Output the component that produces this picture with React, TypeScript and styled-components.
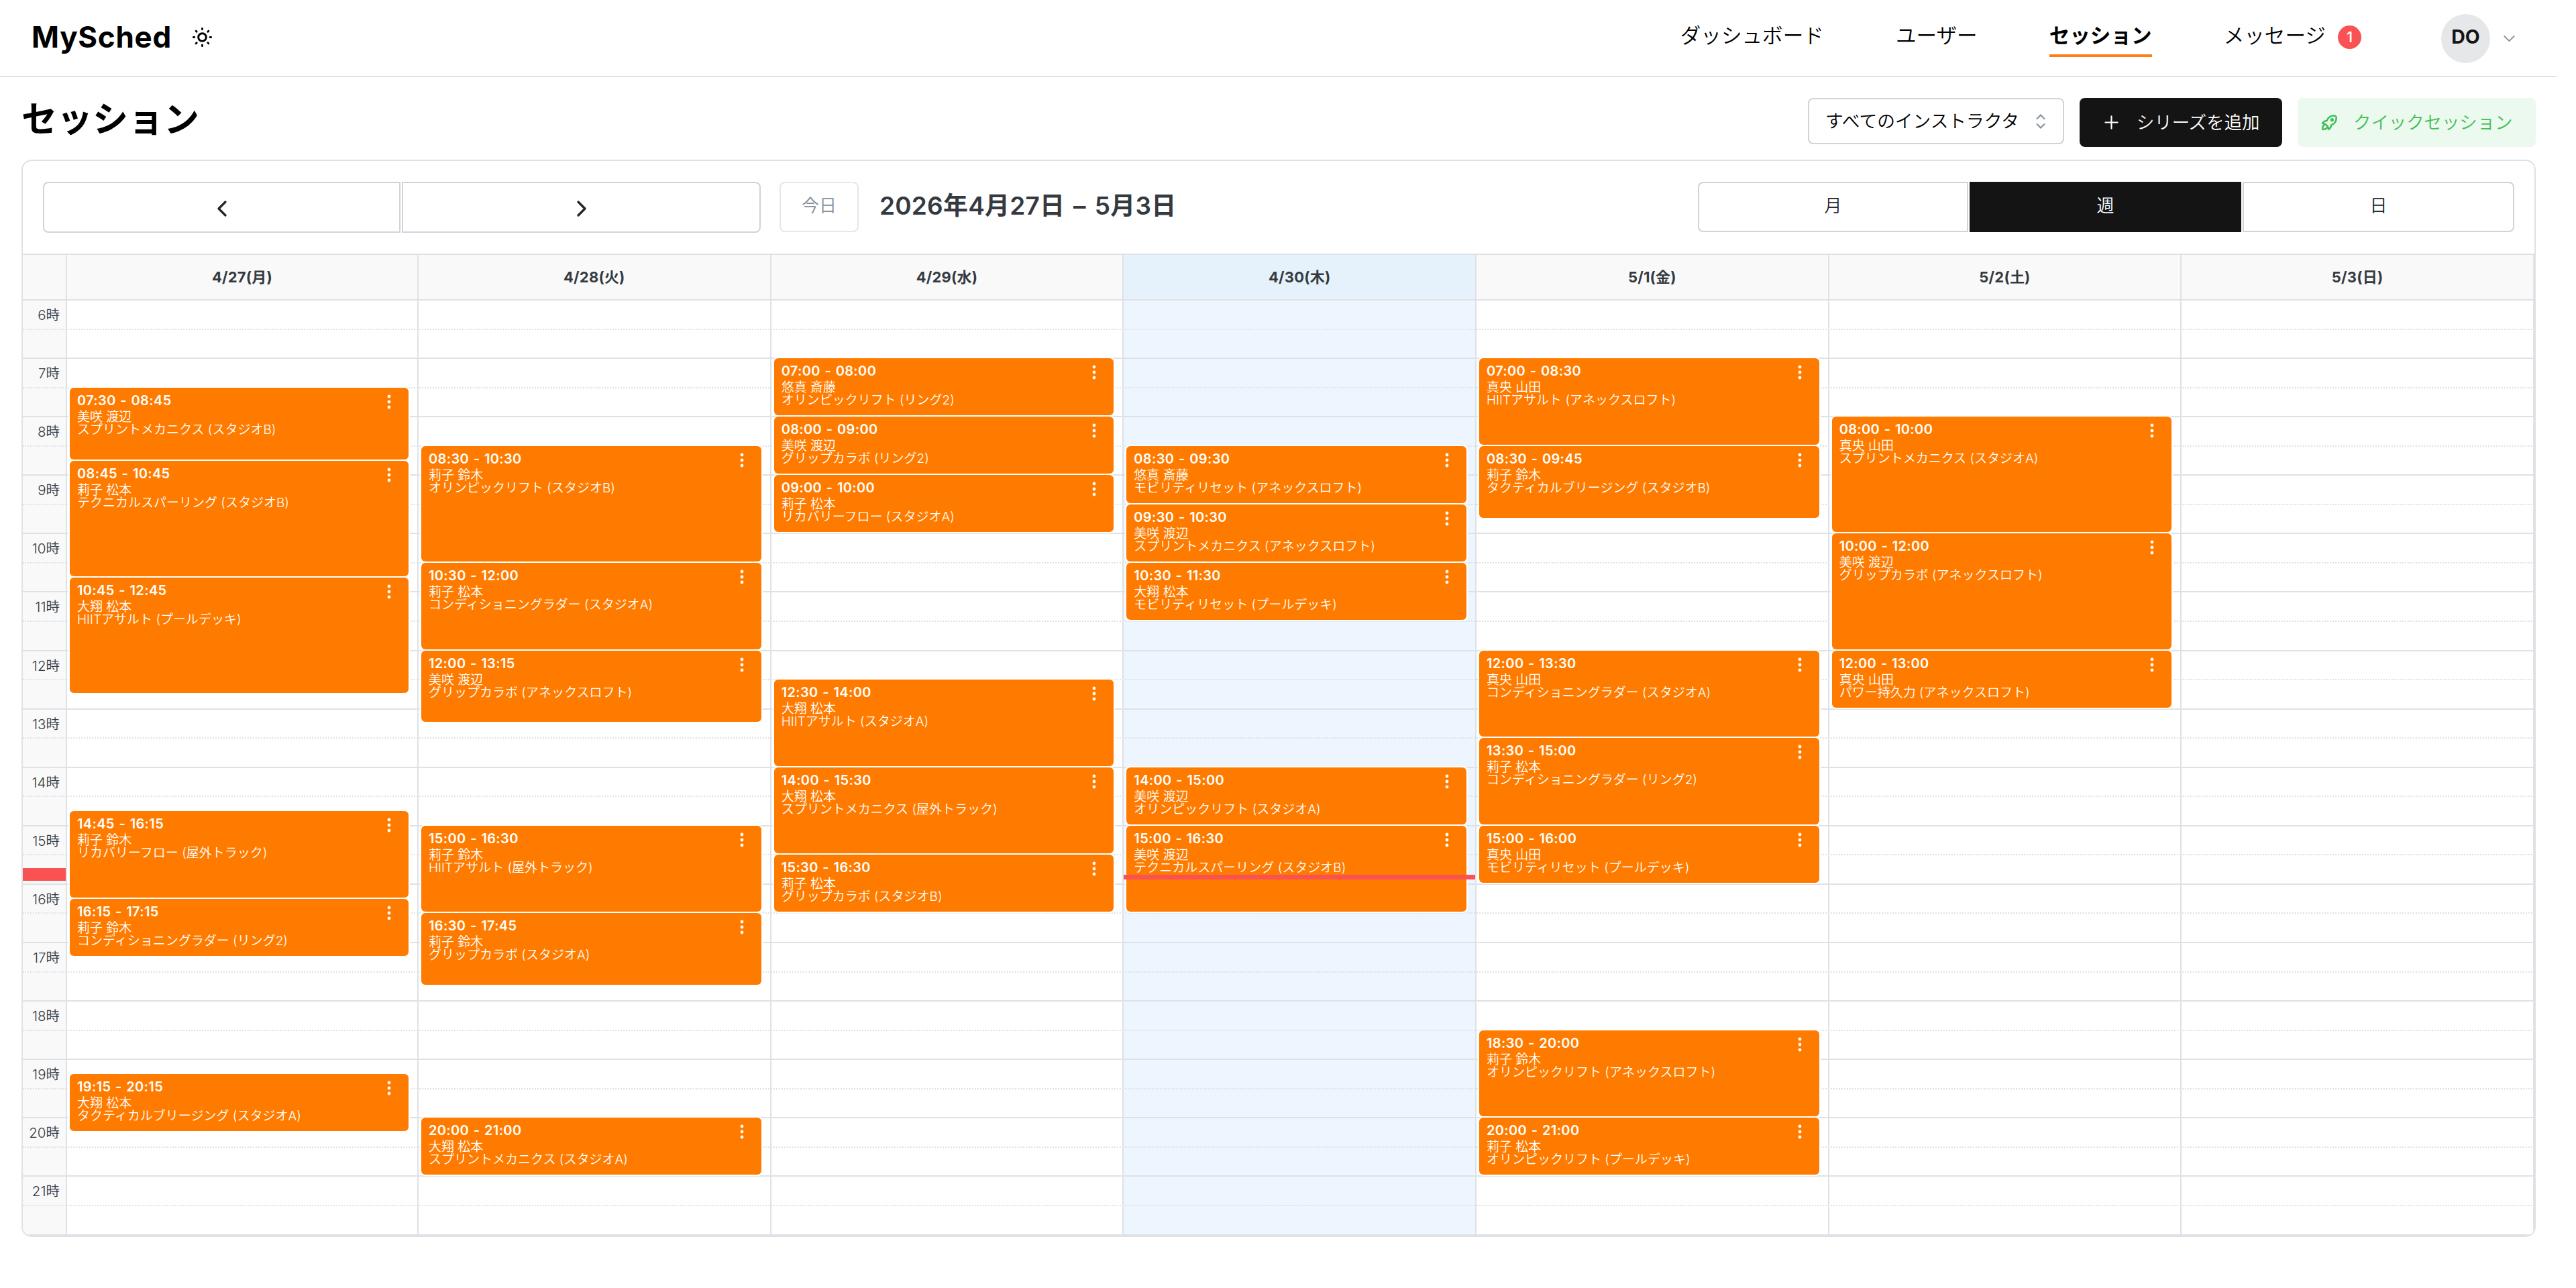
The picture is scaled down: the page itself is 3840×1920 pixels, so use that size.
import React from 'react'
import styled, { createGlobalStyle, css } from 'styled-components'

const SLOT_HEIGHT = 43.55
const FIRST_HOUR = 6
const HOURS = Array.from({ length: 16 }, (_, i) => i + FIRST_HOUR)

type Session = {
  start: string
  end: string
  instructor: string
  title: string
}

type Day = {
  label: string
  today?: boolean
  sessions: Session[]
}

const session = (start: string, end: string, instructor: string, title: string): Session => ({
  start,
  end,
  instructor,
  title,
})

const days: Day[] = [
  {
    label: '4/27(月)',
    sessions: [
      session('07:30', '08:45', '美咲 渡辺', 'スプリントメカニクス (スタジオB)'),
      session('08:45', '10:45', '莉子 松本', 'テクニカルスパーリング (スタジオB)'),
      session('10:45', '12:45', '大翔 松本', 'HIITアサルト (プールデッキ)'),
      session('14:45', '16:15', '莉子 鈴木', 'リカバリーフロー (屋外トラック)'),
      session('16:15', '17:15', '莉子 鈴木', 'コンディショニングラダー (リング2)'),
      session('19:15', '20:15', '大翔 松本', 'タクティカルブリージング (スタジオA)'),
    ],
  },
  {
    label: '4/28(火)',
    sessions: [
      session('08:30', '10:30', '莉子 鈴木', 'オリンピックリフト (スタジオB)'),
      session('10:30', '12:00', '莉子 松本', 'コンディショニングラダー (スタジオA)'),
      session('12:00', '13:15', '美咲 渡辺', 'グリップカラボ (アネックスロフト)'),
      session('15:00', '16:30', '莉子 鈴木', 'HIITアサルト (屋外トラック)'),
      session('16:30', '17:45', '莉子 鈴木', 'グリップカラボ (スタジオA)'),
      session('20:00', '21:00', '大翔 松本', 'スプリントメカニクス (スタジオA)'),
    ],
  },
  {
    label: '4/29(水)',
    sessions: [
      session('07:00', '08:00', '悠真 斎藤', 'オリンピックリフト (リング2)'),
      session('08:00', '09:00', '美咲 渡辺', 'グリップカラボ (リング2)'),
      session('09:00', '10:00', '莉子 松本', 'リカバリーフロー (スタジオA)'),
      session('12:30', '14:00', '大翔 松本', 'HIITアサルト (スタジオA)'),
      session('14:00', '15:30', '大翔 松本', 'スプリントメカニクス (屋外トラック)'),
      session('15:30', '16:30', '莉子 松本', 'グリップカラボ (スタジオB)'),
    ],
  },
  {
    label: '4/30(木)',
    today: true,
    sessions: [
      session('08:30', '09:30', '悠真 斎藤', 'モビリティリセット (アネックスロフト)'),
      session('09:30', '10:30', '美咲 渡辺', 'スプリントメカニクス (アネックスロフト)'),
      session('10:30', '11:30', '大翔 松本', 'モビリティリセット (プールデッキ)'),
      session('14:00', '15:00', '美咲 渡辺', 'オリンピックリフト (スタジオA)'),
      session('15:00', '16:30', '美咲 渡辺', 'テクニカルスパーリング (スタジオB)'),
    ],
  },
  {
    label: '5/1(金)',
    sessions: [
      session('07:00', '08:30', '真央 山田', 'HIITアサルト (アネックスロフト)'),
      session('08:30', '09:45', '莉子 鈴木', 'タクティカルブリージング (スタジオB)'),
      session('12:00', '13:30', '真央 山田', 'コンディショニングラダー (スタジオA)'),
      session('13:30', '15:00', '莉子 松本', 'コンディショニングラダー (リング2)'),
      session('15:00', '16:00', '真央 山田', 'モビリティリセット (プールデッキ)'),
      session('18:30', '20:00', '莉子 鈴木', 'オリンピックリフト (アネックスロフト)'),
      session('20:00', '21:00', '莉子 松本', 'オリンピックリフト (プールデッキ)'),
    ],
  },
  {
    label: '5/2(土)',
    sessions: [
      session('08:00', '10:00', '真央 山田', 'スプリントメカニクス (スタジオA)'),
      session('10:00', '12:00', '美咲 渡辺', 'グリップカラボ (アネックスロフト)'),
      session('12:00', '13:00', '真央 山田', 'パワー持久力 (アネックスロフト)'),
    ],
  },
  { label: '5/3(日)', sessions: [] },
]

// Row line of a quarter hour, counted from the first hour of the grid
const toRow = (time: string) => {
  const [hours, minutes] = time.split(':').map(Number)
  return (hours - FIRST_HOUR) * 4 + minutes / 15 + 1
}

const GlobalStyle = createGlobalStyle`
  *, *::before, *::after {
    box-sizing: border-box;
  }

  body {
    margin: 0;
    background: #fff;
    color: #000;
    font-family: Inter, 'Noto Sans CJK JP', sans-serif;
    font-size: 26px;
    line-height: 1;
  }

  button {
    margin: 0;
    padding: 0;
    border: 0;
    background: none;
    color: inherit;
    font: inherit;
    white-space: nowrap;
  }
`

const Page = styled.div`
  width: 3811px;
  min-height: 1920px;
`

const Header = styled.header`
  display: flex;
  align-items: flex-start;
  height: 115px;
  padding: 0 56px 0 47px;
  border-bottom: 2px solid #dee2e6;
`

const Logo = styled.div`
  width: 237px;
  height: 60px;
  margin-top: 25px;
  font-size: 44px;
  font-weight: 700;
  line-height: 60px;
  letter-spacing: 0.7px;
`

const SunIcon = styled.svg`
  width: 35px;
  height: 35px;
  margin-top: 38px;
`

const Nav = styled.nav`
  display: flex;
  gap: 107px;
  margin-left: auto;
`

const NavLink = styled.a<{ $active?: boolean }>`
  display: flex;
  align-items: center;
  gap: 18px;
  height: 59px;
  margin-top: 26px;
  padding-bottom: 1px;
  border-bottom: 4px solid ${({ $active }) => ($active ? '#fd7e14' : 'transparent')};
  font-size: 30.6px;
  font-weight: ${({ $active }) => ($active ? 700 : 350)};
`

const Badge = styled.span`
  display: flex;
  align-items: center;
  justify-content: center;
  width: 35px;
  height: 35px;
  margin-top: 4px;
  border-radius: 50%;
  background: #fa5252;
  color: #fff;
  font-size: 22px;
  font-weight: 500;
`

const Account = styled.div`
  display: flex;
  align-items: center;
  gap: 14px;
  margin: 21px 0 0 119px;
`

const Avatar = styled.div`
  display: flex;
  align-items: center;
  justify-content: center;
  width: 73px;
  height: 73px;
  border-radius: 50%;
  background: #e6e7e9;
  color: #141414;
  font-size: 28.5px;
  font-weight: 700;
  padding-bottom: 5px;
`

const Main = styled.main`
  padding: 31px 31px 0 32px;
`

const TitleBar = styled.div`
  display: flex;
  align-items: flex-start;
  height: 92px;
`

const PageTitle = styled.h1`
  height: 64px;
  margin: 0 auto 0 0;
  font-size: 53px;
  font-weight: 700;
  line-height: 64px;
`

const Select = styled.div`
  display: flex;
  align-items: center;
  justify-content: space-between;
  width: 382px;
  height: 69px;
  padding: 0 26px 0 24px;
  border: 2px solid #ced4da;
  border-radius: 8px;
  font-size: 26.7px;
  font-weight: 350;
  white-space: nowrap;
`

const ActionButton = styled.button<{ $tone: 'dark' | 'green' }>`
  display: flex;
  align-items: center;
  height: 73px;
  margin-left: 23px;
  border-radius: 8px;
  font-size: 26.4px;
  font-weight: 350;

  ${({ $tone }) =>
    $tone === 'dark'
      ? css`
          width: 302px;
          padding-left: 32px;
          gap: 22px;
          background: #141414;
          color: #fff;
        `
      : css`
          width: 355px;
          padding-left: 32px;
          gap: 20px;
          background: #ebf9ee;
          color: #40c057;
        `}
`

const Calendar = styled.section`
  border: 2px solid #dee2e6;
  border-radius: 15px;
  overflow: hidden;
`

const Toolbar = styled.div`
  display: flex;
  align-items: flex-start;
  height: 138px;
  padding: 31px 30px 0;
`

const ButtonGroup = styled.div`
  display: flex;
  gap: 2px;
`

const GroupButton = styled.button<{ $width: number; $height: number; $active?: boolean }>`
  display: flex;
  align-items: center;
  justify-content: center;
  width: ${({ $width }) => $width}px;
  height: ${({ $height }) => $height}px;
  border: 2px solid ${({ $active }) => ($active ? '#141414' : '#ced4da')};
  background: ${({ $active }) => ($active ? '#141414' : '#fff')};
  color: ${({ $active }) => ($active ? '#fff' : '#212529')};
  font-weight: 350;
  padding-bottom: 3px;

  &:first-child {
    border-radius: 8px 0 0 8px;
  }

  &:last-child {
    border-radius: 0 8px 8px 0;
  }

  svg {
    margin-top: 6px;
  }
`

const TodayButton = styled.button`
  width: 118px;
  height: 75px;
  margin-left: 28px;
  padding-bottom: 4px;
  border: 2px solid #e4e7eb;
  border-radius: 8px;
  color: #868e96;
  font-weight: 350;
`

const Range = styled.h2`
  height: 72px;
  margin: 0 auto 0 31px;
  color: #343a40;
  font-size: 37px;
  font-weight: 600;
  line-height: 72px;
  letter-spacing: 0.2px;
  word-spacing: 3.4px;
  white-space: nowrap;
`

const columns = css`
  display: grid;
  grid-template-columns: 66px 524px repeat(6, minmax(0, 1fr));
`

const WeekHead = styled.div`
  ${columns}
  height: 68px;
  border-top: 2px solid #dee2e6;
`

const HeadCell = styled.div<{ $today?: boolean }>`
  display: flex;
  align-items: center;
  justify-content: center;
  border-right: 2px solid #dee2e6;
  background: ${({ $today }) => ($today ? '#e5f2fb' : '#f9f9fa')};
  color: #343a40;
  font-size: 22px;
  font-weight: 700;
  letter-spacing: 0.2px;
`

const WeekBody = styled.div`
  ${columns}
  grid-template-rows: repeat(32, ${SLOT_HEIGHT}px);
  position: relative;
  border-bottom: 2px solid #dee2e6;
`

const Backdrop = styled.div<{ $kind: 'gutter' | 'day' | 'today' }>`
  grid-row: 1 / -1;
  background: ${({ $kind }) => ({ gutter: '#f9f9fa', day: '#fff', today: '#edf5fe' })[$kind]};
`

const Slot = styled.div<{ $half?: boolean }>`
  grid-column: 1 / -1;
  border-top: 2px ${({ $half }) => ($half ? 'dotted' : 'solid')} #dee2e6;
`

const Gutter = styled.div`
  grid-row: 1 / -1;
  grid-column: 1;
  display: grid;
  grid-template-rows: repeat(16, minmax(0, 1fr));
  border-right: 2px solid #dee2e6;
`

const HourLabel = styled.div`
  padding-right: 9px;
  color: #343a40;
  font-size: 20.5px;
  font-weight: 350;
  line-height: 47px;
  text-align: right;
  white-space: nowrap;
`

const DayColumn = styled.div`
  grid-row: 1 / -1;
  position: relative;
  display: grid;
  grid-template-rows: repeat(64, minmax(0, 1fr));
  border-right: 2px solid #dee2e6;
`

const SessionCard = styled.article`
  display: flex;
  justify-content: space-between;
  margin: 1px 13px 1px 4px;
  padding: 6px 25px 0 11px;
  border-radius: 6px;
  background: #ff7b00;
  box-shadow: 0 0 0 2px #fff;
  color: #fff;
`

const SessionTime = styled.div`
  height: 27px;
  font-size: 20px;
  font-weight: 600;
  line-height: 27px;
  letter-spacing: 0.35px;
  word-spacing: 1.2px;
`

const SessionText = styled.div`
  height: 19px;
  font-size: 19px;
  font-weight: 350;
  line-height: 21px;
  white-space: nowrap;
`

const Dots = styled.svg`
  width: 8px;
  height: 24px;
  margin-top: 3px;
`

const NowArrow = styled.div`
  position: absolute;
  top: 848px;
  left: 0;
  width: 64px;
  height: 19px;
  background: #fa5252;
`

const NowLine = styled.div`
  position: absolute;
  top: 858px;
  left: 0;
  right: 0;
  height: 7px;
  background: #fa5252;
`

type IconProps = {
  size: number
  stroke?: number
  d: string[]
}

const Icon = ({ size, stroke = 2, d }: IconProps) => (
  <svg
    width={size}
    height={size}
    viewBox="0 0 24 24"
    fill="none"
    stroke="currentColor"
    strokeWidth={stroke}
    strokeLinecap="round"
    strokeLinejoin="round"
  >
    {d.map((path) => (
      <path key={path} d={path} />
    ))}
  </svg>
)

const AccountChevron = styled.div`
  display: flex;
  color: #868e96;
`

const SessionItem = ({ start, end, instructor, title }: Session) => (
  <SessionCard style={{ gridRow: `${toRow(start)} / ${toRow(end)}` }}>
    <div>
      <SessionTime>
        {start} - {end}
      </SessionTime>
      <SessionText>{instructor}</SessionText>
      <SessionText>{title}</SessionText>
    </div>
    <Dots viewBox="0 0 8 24" fill="#fff">
      <circle cx="4" cy="4" r="2.4" />
      <circle cx="4" cy="12" r="2.4" />
      <circle cx="4" cy="20" r="2.4" />
    </Dots>
  </SessionCard>
)

const App = () => (
  <Page>
    <GlobalStyle />
    <Header>
      <Logo>MySched</Logo>
      <SunIcon viewBox="0 0 24 24" fill="none" stroke="#000" strokeWidth="2" strokeLinecap="round">
        <circle cx="12" cy="12" r="4" />
        <path d="M3 12h1m8 -9v1m8 8h1m-9 8v1m-6.4 -15.4l.7 .7m12.1 -.7l-.7 .7m0 11.4l.7 .7m-12.1 -.7l-.7 .7" />
      </SunIcon>
      <Nav>
        <NavLink>ダッシュボード</NavLink>
        <NavLink>ユーザー</NavLink>
        <NavLink $active>セッション</NavLink>
        <NavLink>
          メッセージ
          <Badge>1</Badge>
        </NavLink>
      </Nav>
      <Account>
        <Avatar>DO</Avatar>
        <AccountChevron>
          <Icon size={29} stroke={1.6} d={['M6 9l6 6l6 -6']} />
        </AccountChevron>
      </Account>
    </Header>
    <Main>
      <TitleBar>
        <PageTitle>セッション</PageTitle>
        <Select>
          すべてのインストラクタ
          <svg width="14" height="22" viewBox="0 0 14 22" fill="none" stroke="#868e96" strokeWidth="2" strokeLinecap="round">
            <path d="M1.5 7L7 1.5L12.5 7M1.5 15L7 20.5L12.5 15" />
          </svg>
        </Select>
        <ActionButton $tone="dark">
          <Icon size={31} stroke={1.7} d={['M12 5v14', 'M5 12h14']} />
          シリーズを追加
        </ActionButton>
        <ActionButton $tone="green">
          <Icon
            size={31}
            d={[
              'M4 13a8 8 0 0 1 7 7a6 6 0 0 0 3 -5a9 9 0 0 0 6 -8a3 3 0 0 0 -3 -3a9 9 0 0 0 -8 6a6 6 0 0 0 -5 3',
              'M7 14a6 6 0 0 0 -3 6a6 6 0 0 0 6 -3',
              'M14 9a1 1 0 1 0 2 0a1 1 0 1 0 -2 0',
            ]}
          />
          クイックセッション
        </ActionButton>
      </TitleBar>
      <Calendar>
        <Toolbar>
          <ButtonGroup>
            <GroupButton $width={533} $height={76}>
              <Icon size={40} d={['M15 6l-6 6l6 6']} />
            </GroupButton>
            <GroupButton $width={535} $height={76}>
              <Icon size={40} d={['M9 6l6 6l-6 6']} />
            </GroupButton>
          </ButtonGroup>
          <TodayButton>今日</TodayButton>
          <Range>2026年4月27日 – 5月3日</Range>
          <ButtonGroup>
            <GroupButton $width={403} $height={75}>
              月
            </GroupButton>
            <GroupButton $width={405} $height={75} $active>
              週
            </GroupButton>
            <GroupButton $width={405} $height={75}>
              日
            </GroupButton>
          </ButtonGroup>
        </Toolbar>
        <WeekHead>
          <HeadCell />
          {days.map(({ label, today }) => (
            <HeadCell key={label} $today={today}>
              {label}
            </HeadCell>
          ))}
        </WeekHead>
        <WeekBody>
          <Backdrop $kind="gutter" style={{ gridColumn: 1 }} />
          {days.map(({ label, today }, index) => (
            <Backdrop key={label} $kind={today ? 'today' : 'day'} style={{ gridColumn: index + 2 }} />
          ))}
          {HOURS.map((hour, index) => (
            <React.Fragment key={hour}>
              <Slot style={{ gridRow: index * 2 + 1 }} />
              <Slot $half style={{ gridRow: index * 2 + 2 }} />
            </React.Fragment>
          ))}
          <Gutter>
            {HOURS.map((hour) => (
              <HourLabel key={hour}>{hour}時</HourLabel>
            ))}
            <NowArrow />
          </Gutter>
          {days.map(({ label, today, sessions }, index) => (
            <DayColumn key={label} style={{ gridColumn: index + 2 }}>
              {sessions.map((item) => (
                <SessionItem key={item.start} {...item} />
              ))}
              {today && <NowLine />}
            </DayColumn>
          ))}
        </WeekBody>
      </Calendar>
    </Main>
  </Page>
)

export default App
